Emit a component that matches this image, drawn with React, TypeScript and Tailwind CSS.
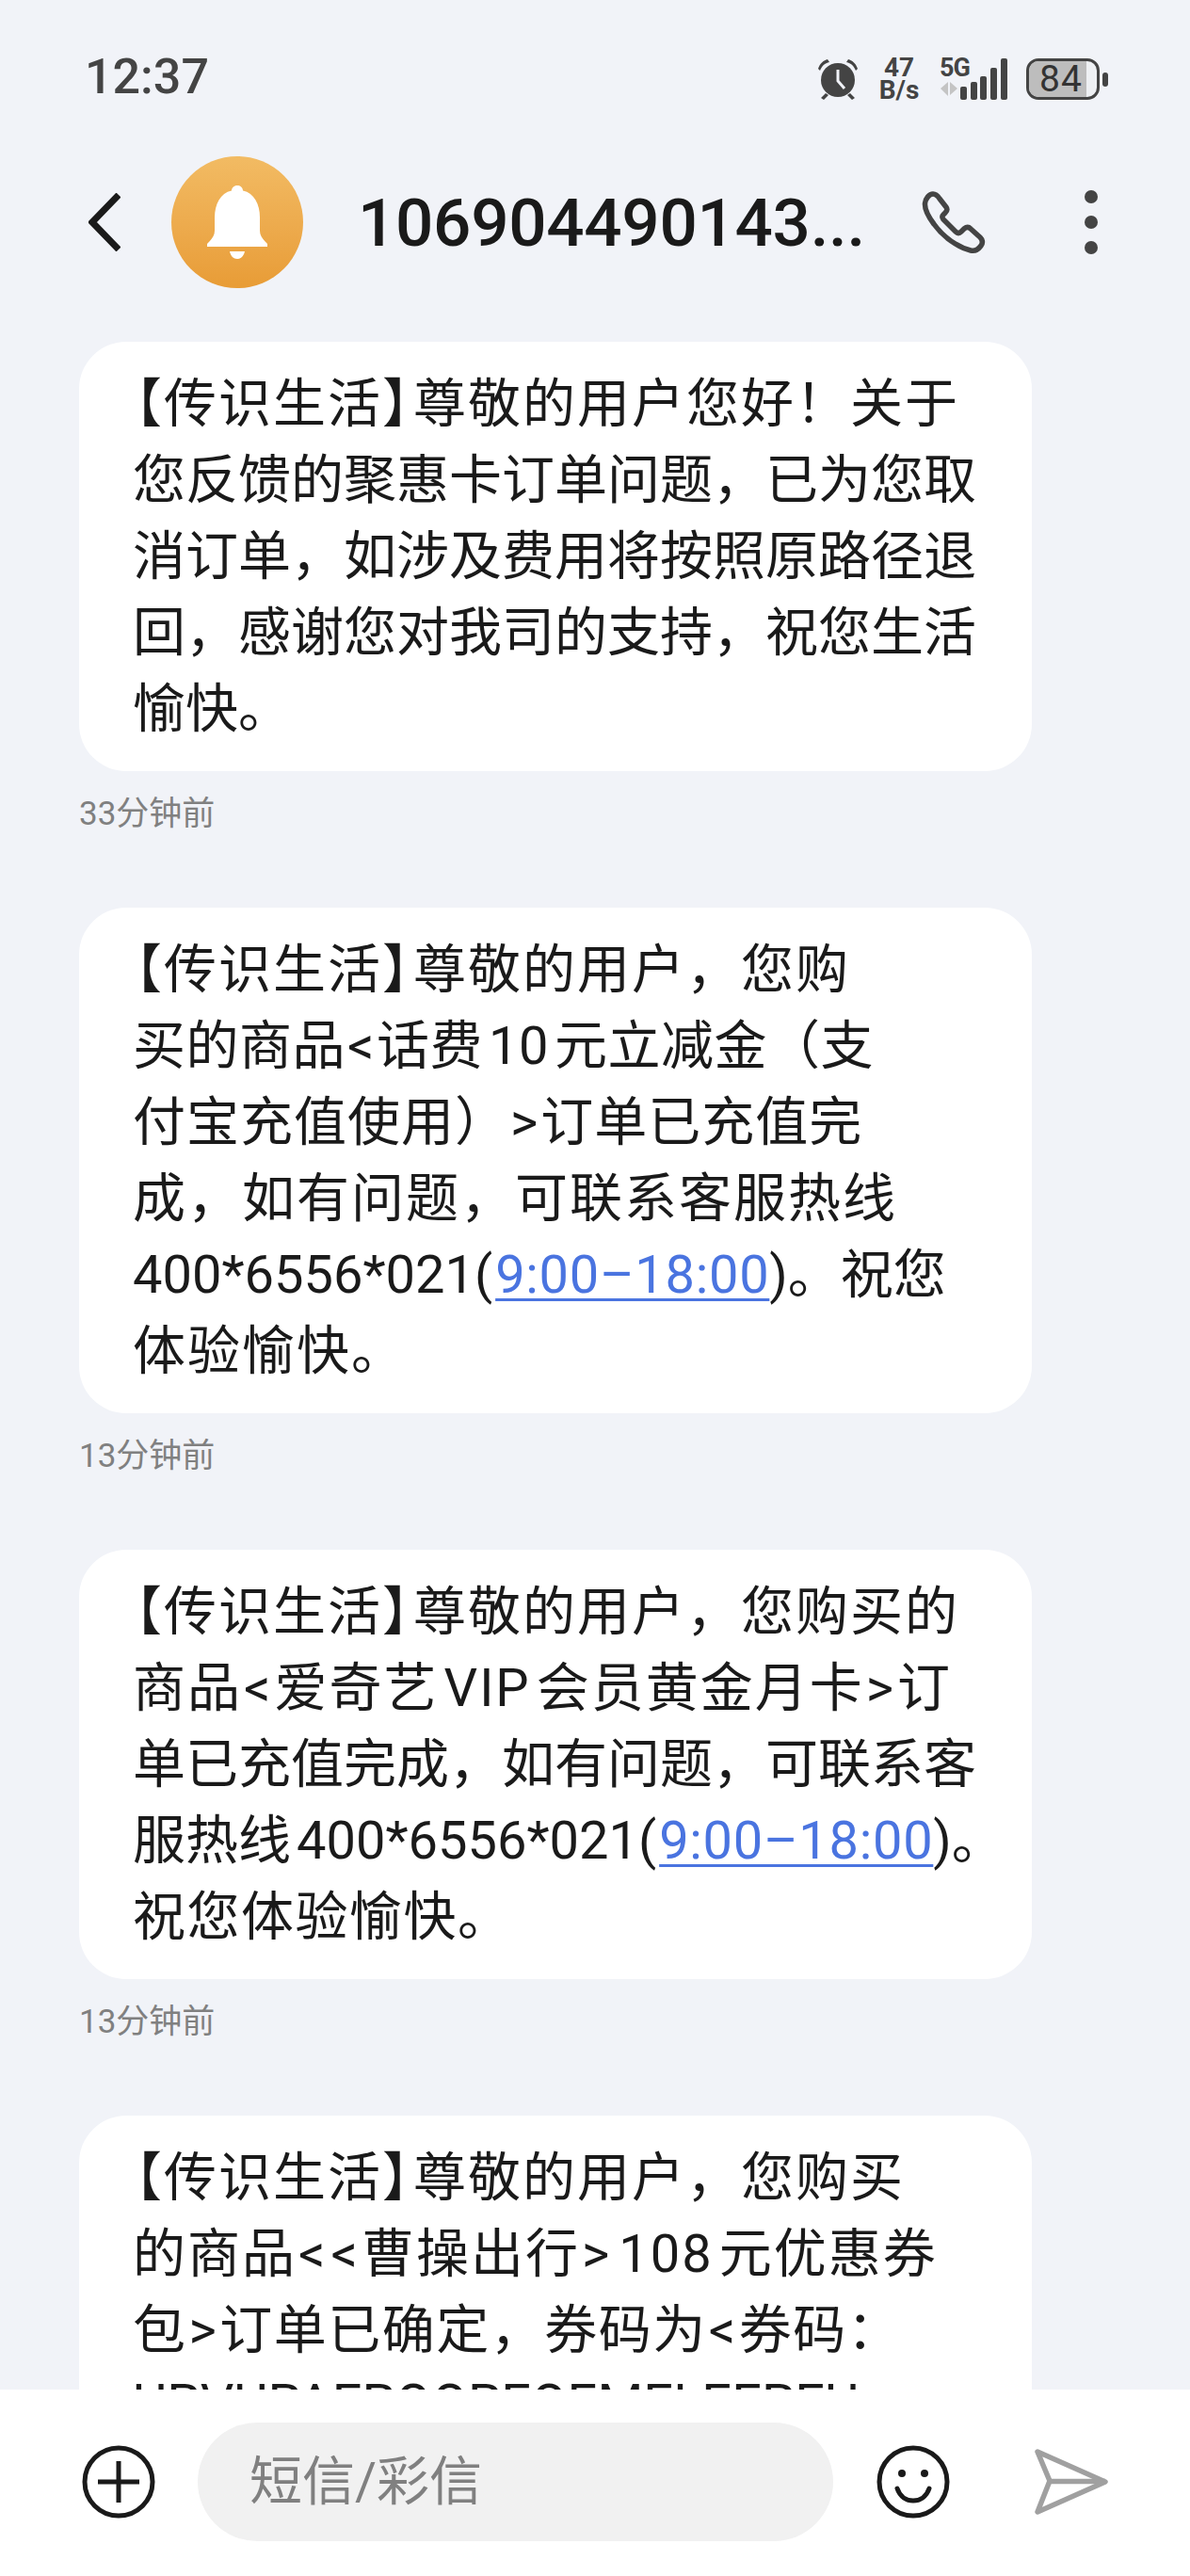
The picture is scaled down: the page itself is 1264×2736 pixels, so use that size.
import React from 'react';

const font = '[font-family:Roboto,"Noto_Sans_CJK_SC",sans-serif]';

type Msg = { lines: React.ReactNode[]; time: string };

const Link = ({ children }: { children: React.ReactNode }) => (
  <span className="ml-[3px] text-[#4a74e0] tracking-[0.7px] underline decoration-[3px] underline-offset-[6px]">{children}</span>
);

// angle brackets and latin runs sit a little apart from the CJK text
const Angle = ({ children }: { children: React.ReactNode }) => <span className="mx-[2px]">{children}</span>;
const Latin = ({ children }: { children: React.ReactNode }) => <span className="mx-[6px]">{children}</span>;

const Head = ({ children }: { children: React.ReactNode }) => (
  <span className="tracking-[2px]">
    <span className="ml-[-25px]">【</span>传识生活<span className="mr-[-25px]">】</span>
    {children}
  </span>
);

const messages: Msg[] = [
  {
    lines: [
      <Head>尊敬的用户您好！关于</Head>,
      '您反馈的聚惠卡订单问题，已为您取',
      '消订单，如涉及费用将按照原路径退',
      '回，感谢您对我司的支持，祝您生活',
      '愉快。',
    ],
    time: '33分钟前',
  },
  {
    lines: [
      <Head>尊敬的用户，您购</Head>,
      <span className="tracking-[0.5px]">买的商品<Angle>&lt;</Angle>话费<Latin>10</Latin>元立减金（支</span>,
      <span className="tracking-[1px]">付宝充值使用）<Angle>&gt;</Angle>订单已充值完</span>,
      <span className="tracking-[2px]">成，如有问题，可联系客服热线</span>,
      <>400*6556*021(<Link>9:00–18:00</Link>)。祝您</>,
      <span className="tracking-[2px]">体验愉快。</span>,
    ],
    time: '13分钟前',
  },
  {
    lines: [
      <Head>尊敬的用户，您购买的</Head>,
      <span className="tracking-[2px]">商品<Angle>&lt;</Angle>爱奇艺<Latin>VIP</Latin>会员黄金月卡<Angle>&gt;</Angle>订</span>,
      '单已充值完成，如有问题，可联系客',
      <>服热线<span className="ml-[6px]">400*6556*021(</span><Link>9:00–18:00</Link>)。</>,
      <span className="tracking-[1.5px]">祝您体验愉快。</span>,
    ],
    time: '13分钟前',
  },
];

const lastLines = [
  <Head>尊敬的用户，您购买</Head>,
  <span className="tracking-[2px]">的商品<Angle>&lt;</Angle><Angle>&lt;</Angle>曹操出行<Angle>&gt;</Angle><Latin>108</Latin>元优惠券</span>,
  <span className="tracking-[1.5px]">包<Angle>&gt;</Angle>订单已确定，券码为<Angle>&lt;</Angle>券码：</span>,
  // only the tops of this line show above the input bar
  <div className="mt-[-3px]">UPVUPAEPOOPEOEMELEEPEU</div>,
];

function Bubble({ lines }: { lines: React.ReactNode[] }) {
  return (
    <div className="w-[1012px] rounded-[50px] bg-white pl-[57px] pt-[26px] pb-[25px] text-[56px] leading-[81px] text-[#1a1a1a] whitespace-nowrap">
      {lines.map((line, i) => (
        <div key={i}>{line}</div>
      ))}
    </div>
  );
}

function StatusBar() {
  return (
    <div className="flex h-[108px] items-end justify-between pl-[90px] pr-[87px]">
      <span className="mb-[-2px] text-[52px] leading-[56px] font-medium text-[#444]">12:37</span>
      <div className="flex items-center text-[#444]">
        {/* alarm clock */}
        <svg width="44" height="44" viewBox="0 0 44 44" className="mr-[20px]">
          <circle cx="22" cy="23" r="18" fill="#444" />
          <path d="M22 12v12l7 8" stroke="#f1f3f8" strokeWidth="3" fill="none" />
          <path d="M1 11C3 5 7 2 11 1l2 3C8 5 5 8 3 13zM43 11C41 5 37 2 33 1l-2 3c5 1 8 4 10 9z" fill="#444" />
          <path d="M9 37l-5 5 3 2 5-5zM35 37l5 5-3 2-5-5z" fill="#444" />
        </svg>
        <div className="mr-[20px] flex w-[46px] flex-col items-center text-[28px] leading-[24px] font-bold">
          <span>47</span>
          <span>B/s</span>
        </div>
        <div className="relative mr-[12px] h-[44px] w-[80px]">
          <span className="absolute left-0 top-[-3px] text-[27px] leading-[26px] font-bold tracking-[-1px]">5G</span>
          <svg width="80" height="44" viewBox="0 0 80 44">
            <path d="M1 32l8-7v15zM11 25l8 7-8 7z" fill="#c4c4c4" />
            <rect x="22" y="30" width="7" height="14" rx="2" fill="#444" />
            <rect x="33" y="25" width="7" height="19" rx="2" fill="#444" />
            <rect x="43" y="19" width="7" height="25" rx="2" fill="#444" />
            <rect x="54" y="10" width="7" height="34" rx="2" fill="#444" />
            <rect x="65" y="0" width="7" height="44" rx="2" fill="#444" />
          </svg>
        </div>
        <div className="relative h-[44px] w-[78px] overflow-hidden rounded-[13px] border-[3px] border-[#444] bg-[#eef0f3]">
          <div className="h-full w-[61px] bg-[#bdbdbd]" />
          <span className="absolute inset-0 flex items-center justify-center pr-[4px] text-[39px] leading-none tracking-[1px] text-[#333]">84</span>
        </div>
        <div className="ml-[3px] h-[15px] w-[6px] rounded-[3px] bg-[#444]" />
      </div>
    </div>
  );
}

function Header() {
  return (
    <div className="mt-[58px] flex h-[140px] items-center pl-[94px]">
      <svg width="34" height="62" viewBox="0 0 34 62" fill="none" stroke="#1a1a1a" strokeWidth="7">
        <path d="M32 2L4 31l28 29" />
      </svg>
      <div className="ml-[54px] flex h-[140px] w-[140px] items-center justify-center rounded-full bg-gradient-to-b from-[#f2bb63] to-[#e89c36]">
        <svg width="64" height="78" viewBox="0 0 64 78" fill="#fff">
          <path d="M32 0c3.5 0 6 2.5 6 5.5C50 8 56 20 56 34v14c0 6 4 10 8 14v3H0v-3c4-4 8-8 8-14V34C8 20 14 8 26 5.5 26 2.5 28.5 0 32 0z" />
          <path d="M24 70h16c-1 5-4 8-8 8s-7-3-8-8z" />
        </svg>
      </div>
      <span className="ml-[58px] w-[540px] whitespace-nowrap text-[71px] leading-none font-medium tracking-[-0.3px] text-[#1a1a1a]">106904490143...</span>
      <svg width="70" height="68" viewBox="0 0 70 68" fill="none" stroke="#444" strokeWidth="5.5" strokeLinejoin="round" className="ml-[58px]">
        <path d="M4.5 14C5 9 9 4 13 4c3 0 5 2 7 5l7 9c1.500 2 1 4-1 6l-2 2c-1.500 1.500-1.500 3 0 5l13 13c2 2 4 2 6 0l3-3c2.500-2 5-2 7 0l10 9c3 3 3 6 1 9-3 4-7 6-11 5-13-3-29-14-39-28C8 28 4 21 4.500 14z" />
      </svg>
      <div className="ml-[104px] flex flex-col gap-[13px]">
        <div className="h-[14px] w-[14px] rounded-full bg-[#444]" />
        <div className="h-[14px] w-[14px] rounded-full bg-[#444]" />
        <div className="h-[14px] w-[14px] rounded-full bg-[#444]" />
      </div>
    </div>
  );
}

function InputBar() {
  return (
    <div className="flex h-[198px] items-center bg-white pb-[2px] pl-[87px]">
      <svg width="78" height="78" viewBox="0 0 78 78" fill="none" stroke="#1a1a1a" strokeWidth="5">
        <circle cx="39" cy="39" r="36" />
        <path d="M39 17v44M17 39h44" />
      </svg>
      <div className="ml-[45px] flex h-[126px] w-[675px] items-center rounded-[63px] bg-[#f1f1f1] pl-[55px] text-[56px] text-[#808080]">
        短信/彩信
      </div>
      <svg width="78" height="78" viewBox="0 0 78 78" fill="none" stroke="#1a1a1a" strokeWidth="5" className="ml-[46px]">
        <circle cx="39" cy="39" r="36" />
        <circle cx="27" cy="30" r="4" fill="#1a1a1a" stroke="none" />
        <circle cx="51" cy="30" r="4" fill="#1a1a1a" stroke="none" />
        <path d="M22 46c3 9 10 13 17 13s14-4 17-13" strokeLinecap="round" />
      </svg>
      <svg width="78" height="70" viewBox="0 0 78 70" fill="none" stroke="#a0a0a0" strokeWidth="5.5" strokeLinejoin="round" className="ml-[90px]">
        <path d="M3 3l72 32L3 67l13-33z" />
        <path d="M16 34.500h59" />
      </svg>
    </div>
  );
}

export default function App() {
  return (
    <div className={`flex h-[2736px] w-[1264px] flex-col overflow-hidden bg-[#f1f3f8] ${font}`}>
      <StatusBar />
      <Header />
      <div className="mt-[57px] flex flex-1 flex-col overflow-hidden pl-[84px]">
        {messages.map((m, i) => (
          <div key={i} className="mb-[77px]">
            <Bubble lines={m.lines} />
            <div className="mt-[24px] text-[35px] leading-[44px] text-[#808080]">{m.time}</div>
          </div>
        ))}
        <Bubble lines={lastLines} />
      </div>
      <InputBar />
    </div>
  );
}
